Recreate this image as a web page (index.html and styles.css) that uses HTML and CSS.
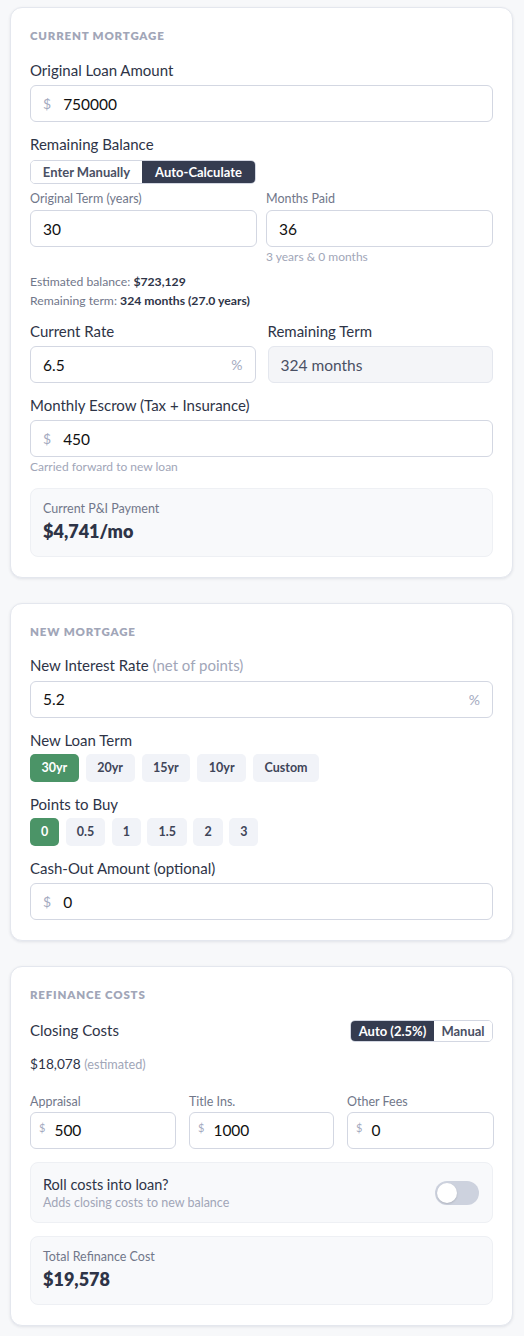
FILE: index.html
```html
<!DOCTYPE html>
<html>
<head>
<meta charset="utf-8">
<link rel="stylesheet" href="styles.css">
</head>
<body>
<div class="page">
  <section class="card card-current">
    <h2 class="card-title">Current Mortgage</h2>
    <div class="field">
      <label class="label">Original Loan Amount</label>
      <div class="input"><span class="prefix">$</span><span class="value">750000</span></div>
    </div>
    <div class="field field-balance">
      <label class="label">Remaining Balance</label>
      <div class="seg seg-balance">
        <span class="seg-btn">Enter Manually</span>
        <span class="seg-btn active">Auto-Calculate</span>
      </div>
      <div class="grid2 grid-term">
        <div>
          <div class="sublabel">Original Term (years)</div>
          <div class="input"><span class="value">30</span></div>
        </div>
        <div>
          <div class="sublabel">Months Paid</div>
          <div class="input"><span class="value">36</span></div>
          <div class="hint">3 years &amp; 0 months</div>
        </div>
      </div>
      <div class="estimate">
        <div>Estimated balance: <b>$723,129</b></div>
        <div>Remaining term: <b>324 months (27.0 years)</b></div>
      </div>
    </div>
    <div class="grid2 grid-rate">
      <div>
        <label class="label">Current Rate</label>
        <div class="input"><span class="value">6.5</span><span class="suffix">%</span></div>
      </div>
      <div>
        <label class="label">Remaining Term</label>
        <div class="input readonly"><span class="value">324 months</span></div>
      </div>
    </div>
    <div class="field field-escrow">
      <label class="label">Monthly Escrow (Tax + Insurance)</label>
      <div class="input"><span class="prefix">$</span><span class="value">450</span></div>
      <div class="hint">Carried forward to new loan</div>
    </div>
    <div class="summary">
      <div class="summary-label">Current P&amp;I Payment</div>
      <div class="summary-value">$4,741/mo</div>
    </div>
  </section>

  <section class="card card-new">
    <h2 class="card-title">New Mortgage</h2>
    <div class="field">
      <label class="label">New Interest Rate <span class="muted">(net of points)</span></label>
      <div class="input"><span class="value">5.2</span><span class="suffix">%</span></div>
    </div>
    <div class="field field-pills">
      <label class="label">New Loan Term</label>
      <div class="pills">
        <span class="pill active">30yr</span>
        <span class="pill">20yr</span>
        <span class="pill">15yr</span>
        <span class="pill">10yr</span>
        <span class="pill">Custom</span>
      </div>
    </div>
    <div class="field field-pills">
      <label class="label">Points to Buy</label>
      <div class="pills pills-pts">
        <span class="pill pt active">0</span>
        <span class="pill pt">0.5</span>
        <span class="pill pt">1</span>
        <span class="pill pt">1.5</span>
        <span class="pill pt">2</span>
        <span class="pill pt">3</span>
      </div>
    </div>
    <div class="field field-last">
      <label class="label">Cash-Out Amount (optional)</label>
      <div class="input"><span class="prefix">$</span><span class="value">0</span></div>
    </div>
  </section>

  <section class="card card-costs">
    <h2 class="card-title">Refinance Costs</h2>
    <div class="row-between">
      <span class="label">Closing Costs</span>
      <div class="seg seg-small">
        <span class="seg-btn active">Auto (2.5%)</span>
        <span class="seg-btn">Manual</span>
      </div>
    </div>
    <div class="closing-est">$18,078 <span class="muted">(estimated)</span></div>
    <div class="grid3">
      <div>
        <div class="sublabel sublabel-tight">Appraisal</div>
        <div class="input small"><span class="prefix sm">$</span><span class="value">500</span></div>
      </div>
      <div>
        <div class="sublabel sublabel-tight">Title Ins.</div>
        <div class="input small"><span class="prefix sm">$</span><span class="value">1000</span></div>
      </div>
      <div>
        <div class="sublabel sublabel-tight">Other Fees</div>
        <div class="input small"><span class="prefix sm">$</span><span class="value">0</span></div>
      </div>
    </div>
    <div class="roll">
      <div>
        <div class="roll-title">Roll costs into loan?</div>
        <div class="roll-sub">Adds closing costs to new balance</div>
      </div>
      <span class="switch"><span class="knob"></span></span>
    </div>
    <div class="summary summary-total">
      <div class="summary-label">Total Refinance Cost</div>
      <div class="summary-value">$19,578</div>
    </div>
  </section>
</div>
</body>
</html>
```

FILE: styles.css
```css
* { box-sizing: border-box; }
html, body { margin: 0; padding: 0; }
body {
  background: #f7f8fa;
  font-family: "Lato", "Inter", "Liberation Sans", sans-serif;
  color: #2e3447;
}
.page {
  padding: 7px 11px 12px 10px;
  display: flex;
  flex-direction: column;
  gap: 25px;
}
.card {
  background: #fff;
  border: 1px solid #e4e7ee;
  border-radius: 12px;
  box-shadow: 0 1px 3px rgba(30, 40, 70, 0.10);
  padding: 20px 19px 20px 19px;
}
.card-title {
  margin: 0 0 16.5px;
  font-size: 11.5px;
  line-height: 16px;
  font-weight: 800;
  letter-spacing: 0.07em;
  text-transform: uppercase;
  color: #a1a6b8;
}
.field { margin-bottom: 13px; }
.label {
  display: block;
  font-size: 15px;
  line-height: 19px;
  color: #2e3447;
  margin-bottom: 5.5px;
}
.muted { color: #a1a6b8; }
.input {
  height: 37px;
  border: 1px solid #d3d7e2;
  border-radius: 6px;
  background: #fff;
  display: flex;
  align-items: center;
  padding: 0 12px;
  font-size: 15.5px;
}
.input .prefix {
  color: #a4aac0;
  font-size: 14px;
  margin-right: 12px;
}
.input .value { color: #111; flex: 1; }
.input .suffix { color: #a4aac0; font-size: 14px; }
.input.readonly {
  background: #f4f5f8;
  border-color: #e4e7ee;
}
.input.readonly .value { color: #4a5064; }
.seg {
  display: inline-flex;
  border: 1px solid #d3d7e2;
  border-radius: 5px;
  overflow: hidden;
}
.seg-btn {
  font-size: 13px;
  font-weight: 700;
  color: #4a5064;
  text-align: center;
  line-height: 22px;
  background: #fff;
}
.seg-btn.active { background: #353c50; color: #fff; }
.seg-balance { margin-bottom: 8.5px; }
.seg-balance .seg-btn { width: 111px; }
.seg-balance .seg-btn.active { width: 113px; }
.grid2 {
  display: grid;
  grid-template-columns: 1fr 1fr;
}
.grid-term { column-gap: 9px; }
.grid-rate { column-gap: 12px; margin-top: 12px; margin-bottom: 12.5px; }
.field-balance { margin-bottom: 0; }
.sublabel {
  font-size: 12.5px;
  line-height: 14px;
  color: #71778a;
  margin-bottom: 4px;
}
.sublabel-tight { margin-bottom: 3px; }
.hint {
  font-size: 12px;
  line-height: 14px;
  color: #a1a6b8;
  margin-top: 3px;
}
.estimate {
  margin-top: 7.5px;
  font-size: 12.2px;
  line-height: 19px;
  color: #71778a;
}
.estimate b { color: #2e3447; font-weight: 700; }
.field-escrow { margin-bottom: 0; }
.summary {
  background: #f8f9fb;
  border: 1px solid #eef0f4;
  border-radius: 8px;
  padding: 12px 12px 14px;
  margin-top: 13.5px;
}
.summary-label {
  font-size: 12.5px;
  line-height: 16px;
  color: #71778a;
  margin-bottom: 3px;
}
.summary-value {
  font-size: 18px;
  line-height: 22px;
  font-weight: 800;
  color: #2e3447;
}
.field-pills .label { margin-bottom: 4.5px; }
.field-pills { margin-bottom: 12.5px; }
.pills { display: flex; gap: 7px; }
.pills-pts { gap: 6.5px; }
.pill {
  height: 28px;
  line-height: 28px;
  padding: 0 11.5px;
  border-radius: 5px;
  background: #f1f3f8;
  font-size: 12.5px;
  font-weight: 700;
  color: #3f4559;
}
.pill.pt { padding: 0 11px; }
.pill.active { background: #4b9467; color: #fff; }
.field-last { margin-bottom: 0; }
.field-last .label { margin-bottom: 5.5px; }
.row-between {
  display: flex;
  justify-content: space-between;
  align-items: center;
  height: 22px;
  margin-bottom: 13px;
}
.row-between .label { margin-bottom: 0; }
.seg-small .seg-btn { line-height: 20px; width: 83px; }
.seg-small .seg-btn + .seg-btn { width: 58px; }
.closing-est {
  font-size: 13.7px;
  line-height: 18px;
  color: #2e3447;
  margin-bottom: 22px;
}
.closing-est .muted { font-size: 12.7px; }
.grid3 {
  display: grid;
  grid-template-columns: 146px 145px 147px;
  column-gap: 13px;
  margin-bottom: 13px;
}
.input.small { padding: 0 8px; }
.prefix.sm { font-size: 11px; align-self: flex-start; margin-top: 8px; margin-right: 9px; }
.roll {
  background: #f8f9fb;
  border: 1px solid #eef0f4;
  border-radius: 8px;
  padding: 12px 12px 11px;
  display: flex;
  align-items: center;
  justify-content: space-between;
}
.roll-title { font-size: 14.5px; line-height: 19px; color: #2e3447; }
.roll-sub { font-size: 12.5px; line-height: 17px; color: #a1a6b8; }
.switch {
  width: 44px;
  height: 24px;
  border-radius: 12px;
  background: #cdd2de;
  position: relative;
  margin-right: 1px;
}
.knob {
  position: absolute;
  left: 2px;
  top: 2px;
  width: 20px;
  height: 20px;
  border-radius: 50%;
  background: #fff;
  box-shadow: 0 1px 2px rgba(0,0,0,0.15);
}
.summary-total { margin-top: 13px; }
```
